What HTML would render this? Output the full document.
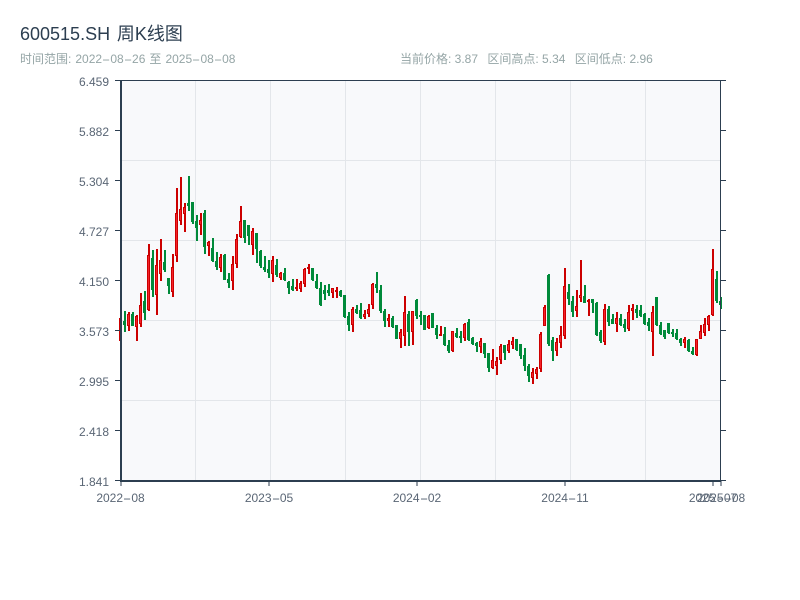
<!DOCTYPE html>
<html lang="zh"><head><meta charset="utf-8"><title>600515.SH 周K线图</title>
<style>
html,body{margin:0;padding:0;background:#fff}
body{width:800px;height:600px;position:relative;overflow:hidden;font-family:"Liberation Sans","Noto Sans CJK SC",sans-serif}
.t{position:absolute;white-space:pre;line-height:1}
.h{display:inline-block;width:8.3px;text-align:center;transform:scaleX(2.1)}
.y{right:691px;font-size:12px;color:#5a6675;height:12px}
.x{font-size:12px;color:#5a6675;width:80px;text-align:center;top:492px}
.s{font-size:12px;color:#95a5a6;top:53px}
svg{position:absolute;left:0;top:0}
</style></head><body>
<svg width="800" height="600" viewBox="0 0 800 600">
<rect x="121" y="81" width="600" height="400" fill="#f8f9fb"/>
<path d="M195.5 81V481M270.5 81V481M345.5 81V481M420.5 81V481M495.5 81V481M570.5 81V481M645.5 81V481M121 160.5H721M121 240.5H721M121 320.5H721M121 400.5H721" stroke="#e3e6ea" stroke-width="1" fill="none"/>
<g fill="none">
<path stroke="#008a3a" stroke-width="2" d="M125 311V332M133 312V326M145 291V320M153 250V297M165 250V272M169 278V294M189 176V211M193 202V224M197 215V241M205 210V254M213 238V262M217 252V270M225 254V280M229 273V288M245 220V243M249 225V245M257 233V263M261 250V268M265 256V272M269 260V278M277 259V277M285 268V281M289 281V294M293 279V291M313 268V281M317 274V289M321 282V306M325 285V300M329 284V296M341 290V297M345 295V318M349 312V331M357 305V314M361 303V319M377 272V293M381 285V313M385 309V327M393 316V328M397 325V339M409 311V346M417 299V319M421 311V325M425 315V330M433 313V328M437 325V339M445 327V346M449 340V353M457 328V338M461 331V343M469 319V341M473 337V345M477 342V352M485 343V358M489 353V372M505 345V360M517 339V351M521 344V359M525 348V371M529 364V382M549 274V346M553 337V361M569 284V305M573 296V317M585 285V303M593 299V313M597 302V336M601 330V343M609 306V326M613 314V324M621 314V326M625 319V332M637 305V318M641 305V317M645 313V325M649 318V331M657 297V326M661 322V335M665 330V339M669 323V334M673 329V337M677 329V340M681 338V346M689 339V352M693 347V355M717 271V303M721 297V309"/>
<path stroke="#008a3a" stroke-width="3" d="M124.5 321V325M132.5 314V326M144.5 301V313M152.5 258V290M164.5 262V270M168.5 278V286M188.5 203V206M192.5 202V222M196.5 221V228M204.5 213V247M212.5 248V261M216.5 261V267M224.5 255V280M228.5 279V283M244.5 220V238M248.5 225V236M256.5 233V249M260.5 251V266M264.5 267V270M268.5 269V273M276.5 265V275M284.5 273V280M288.5 282V288M292.5 286V290M312.5 268V280M316.5 281V288M320.5 288V305M324.5 290V294M328.5 290V293M340.5 291V296M344.5 295V317M348.5 316V325M356.5 309V313M360.5 310V318M376.5 284V288M380.5 290V311M384.5 311V321M392.5 318V327M396.5 325V339M408.5 314V332M416.5 300V316M420.5 315V317M424.5 315V330M432.5 313V328M436.5 328V335M444.5 334V345M448.5 345V351M456.5 333V337M460.5 336V338M468.5 322V340M472.5 338V344M476.5 343V346M484.5 343V354M488.5 353V368M504.5 345V353M516.5 339V350M520.5 344V356M524.5 355V366M528.5 366V376M548.5 275V344M552.5 340V351M568.5 292V299M572.5 301V312M584.5 296V303M592.5 299V303M596.5 303V335M600.5 332V341M608.5 309V322M612.5 319V324M620.5 318V325M624.5 324V328M636.5 309V313M640.5 310V316M644.5 314V324M648.5 322V326M656.5 297V325M660.5 325V334M664.5 330V337M668.5 323V333M672.5 332V334M676.5 333V339M680.5 339V343M688.5 340V351M692.5 351V354M716.5 279V301M720.5 301V305"/>
<path stroke="#cc0000" stroke-width="2" d="M121 318V341M129 312V331M137 315V341M141 293V327M149 244V311M157 249V315M161 239V281M173 254V297M177 188V262M181 177V225M185 203V232M201 213V235M209 241V256M221 254V272M233 256V290M237 234V268M241 206V238M253 228V255M273 256V282M281 272V280M297 279V291M301 281V292M305 268V287M309 264V274M333 288V298M337 287V298M353 307V332M365 310V319M369 304V317M373 283V309M389 314V327M401 329V348M405 296V346M413 311V345M429 315V329M441 326V336M453 331V352M465 323V341M481 338V353M493 349V369M497 357V375M501 344V364M509 340V353M513 337V349M533 368V384M537 367V379M541 332V372M545 305V326M557 338V356M561 326V348M565 268V339M577 290V317M581 260V302M589 299V316M605 304V345M617 312V332M629 305V331M633 304V320M653 306V356M685 337V348M697 339V356M701 325V339M705 318V336M709 315V331M713 249V316"/>
<path stroke="#cc0000" stroke-width="3" d="M120.5 318V341M128.5 314V326M136.5 316V327M140.5 305V324M148.5 255V310M156.5 265V295M160.5 260V274M172.5 267V292M176.5 213V256M180.5 209V221M184.5 207V214M200.5 220V225M208.5 242V246M220.5 257V268M232.5 264V281M236.5 239V264M240.5 221V237M252.5 231V245M272.5 260V274M280.5 273V278M296.5 287V289M300.5 283V289M304.5 269V284M308.5 267V269M332.5 288V293M336.5 290V292M352.5 309V325M364.5 314V317M368.5 309V314M372.5 284V305M388.5 318V321M400.5 332V339M404.5 312V336M412.5 311V332M428.5 316V328M440.5 334V336M452.5 331V351M464.5 324V338M480.5 341V347M492.5 360V368M496.5 361V366M500.5 346V360M508.5 344V351M512.5 341V345M532.5 372V378M536.5 369V374M540.5 334V369M544.5 307V326M556.5 342V351M560.5 335V343M564.5 286V336M576.5 306V311M580.5 295V298M588.5 300V302M604.5 309V342M616.5 318V324M628.5 312V329M632.5 308V311M652.5 312V332M684.5 339V343M696.5 339V355M700.5 331V339M704.5 324V333M708.5 316V325M712.5 269V315"/>
<path stroke="#f5222a" stroke-width="1" d="M128.5 315V325M136.5 317V326M140.5 306V323M148.5 256V309M156.5 266V294M160.5 261V273M172.5 268V291M176.5 214V255M180.5 210V220M184.5 208V213M200.5 221V224M208.5 243V245M220.5 258V267M232.5 265V280M236.5 240V263M240.5 222V236M252.5 232V244M272.5 261V273M280.5 274V277M300.5 284V288M304.5 270V283M332.5 289V292M352.5 310V324M364.5 315V316M368.5 310V313M372.5 285V304M388.5 319V320M400.5 333V338M404.5 313V335M412.5 312V331M428.5 317V327M452.5 332V350M464.5 325V337M480.5 342V346M492.5 361V367M496.5 362V365M500.5 347V359M508.5 345V350M512.5 342V344M532.5 373V377M536.5 370V373M540.5 335V368M544.5 308V325M556.5 343V350M560.5 336V342M564.5 287V335M576.5 307V310M580.5 296V297M604.5 310V341M616.5 319V323M628.5 313V328M632.5 309V310M652.5 313V331M684.5 340V342M696.5 340V354M700.5 332V338M704.5 325V332M708.5 317V324M712.5 270V314"/>
</g>
<g fill="none" stroke="#2c3e50">
<path stroke-width="1" d="M115 80.5H726M720.5 80V481"/>
<path stroke-width="1" d="M115 130.5H121M115 180.5H121M115 230.5H121M115 280.5H121M115 330.5H121M115 380.5H121M115 430.5H121M115 480.5H121M721 130.5H726M721 180.5H726M721 230.5H726M721 280.5H726M721 330.5H726M721 380.5H726M721 430.5H726M721 480.5H726"/>
<path stroke-width="1" d="M269 481V486M417 481V486M565 481V486M713 481V486M721 481V486M121 481V486"/>
<path stroke-width="2" d="M121 80V482M120 481H721"/>
</g>
</svg>
<div class="t" style="left:20px;top:25px;font-size:18px;color:#2c3e50;word-spacing:1.8px">600515.SH 周K线图</div>
<div class="t s" style="left:20px;word-spacing:.7px">时间范围: 2022<span class="h">-</span>08<span class="h">-</span>26 至 2025<span class="h">-</span>08<span class="h">-</span>08</div>
<div class="t s" style="left:400px">当前价格: 3.87</div>
<div class="t s" style="left:487.4px">区间高点: 5.34</div>
<div class="t s" style="left:574.8px">区间低点: 2.96</div>
<div class="t y" style="top:76px">6.459</div>
<div class="t y" style="top:126px">5.882</div>
<div class="t y" style="top:176px">5.304</div>
<div class="t y" style="top:226px">4.727</div>
<div class="t y" style="top:276px">4.150</div>
<div class="t y" style="top:326px">3.573</div>
<div class="t y" style="top:376px">2.995</div>
<div class="t y" style="top:426px">2.418</div>
<div class="t y" style="top:476px">1.841</div>
<div class="t x" style="left:80.5px">2022<span class="h">-</span>08</div>
<div class="t x" style="left:229px">2023<span class="h">-</span>05</div>
<div class="t x" style="left:377px">2024<span class="h">-</span>02</div>
<div class="t x" style="left:525px">2024<span class="h">-</span>11</div>
<div class="t x" style="left:673px">2025<span class="h">-</span>07</div>
<div class="t x" style="left:681px">2025<span class="h">-</span>08</div>
</body></html>
